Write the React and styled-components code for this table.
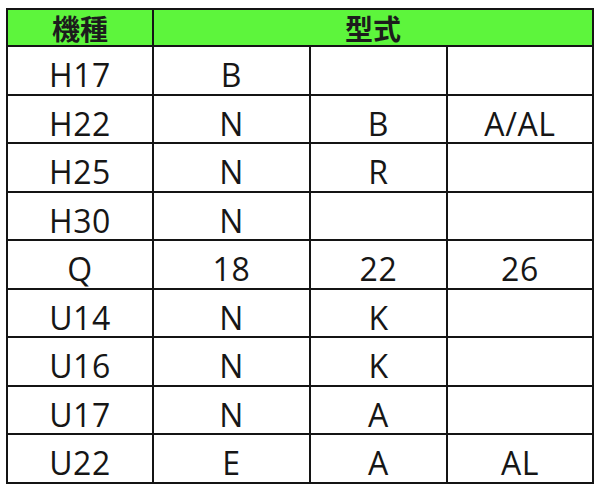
import { styled, createGlobalStyle } from "styled-components";

const GlobalStyle = createGlobalStyle`
    html, body {
        margin: 0;
        padding: 0;
        background: #ffffff;
    }
    body {
        padding: 8px 6px;
        font-family: "Open Sans", "Noto Sans CJK JP", sans-serif;
    }
`

const rows = [
    ["H17", "B", "", ""],
    ["H22", "N", "B", "A/AL"],
    ["H25", "N", "R", ""],
    ["H30", "N", "", ""],
    ["Q", "18", "22", "26"],
    ["U14", "N", "K", ""],
    ["U16", "N", "K", ""],
    ["U17", "N", "A", ""],
    ["U22", "E", "A", "AL"],
]

const App = () =>
{
    return (
    <>
        <GlobalStyle />
        <Table>
            <HeadCell>機種</HeadCell>
            <HeadCell $span={3}>型式</HeadCell>
            {rows.map((row, i) =>
                row.map((value, j) => <Cell key={i + "-" + j}>{value}</Cell>)
            )}
        </Table>
    </>)
}

const Table = styled.div`
    width: 588px;
    box-sizing: border-box;
    display: grid;
    grid-template-columns: 144px 155px 135px 144px;
    grid-template-rows: 35px repeat(9, 46.5px);
    gap: 2px;
    padding: 2px;
    background-color: #141414;
`

const HeadCell = styled.div`
    grid-column: span ${props => props.$span || 1};
    background-color: #5df53c;
    color: #1c1c1c;
    font-family: "Noto Sans CJK JP", sans-serif;
    font-size: 28px;
    font-weight: 700;
    line-height: 28px;
    text-align: center;
    padding-top: 4px;
    box-sizing: border-box;
`

const Cell = styled.div`
    background-color: #ffffff;
    color: #161616;
    font-size: 32px;
    font-weight: 500;
    letter-spacing: 0.6px;
    line-height: 32px;
    text-align: center;
    padding-top: 12px;
    box-sizing: border-box;
`

export default App;
